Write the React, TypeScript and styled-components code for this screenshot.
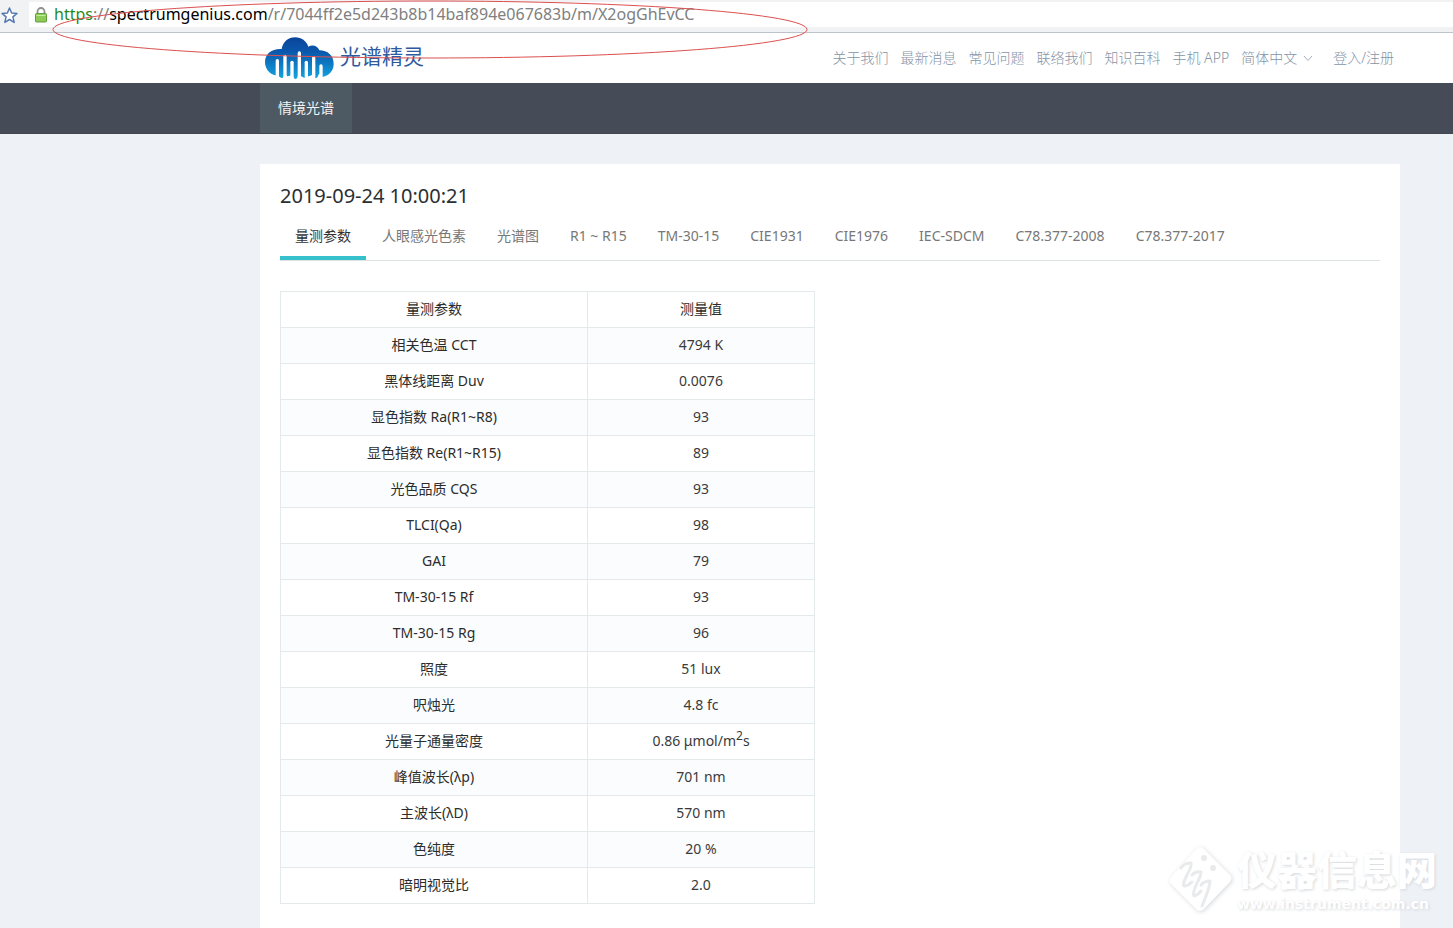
import React from "react";
import styled, { createGlobalStyle } from "styled-components";

const GlobalStyle = createGlobalStyle`
  *, *::before, *::after { box-sizing: border-box; }
  body {
    margin: 0;
    background: #eef2f7;
    color: #333;
    font-family: "Noto Sans", "Noto Sans CJK SC", sans-serif;
    font-size: 14px;
    line-height: 20px;
  }
`;

const Page = styled.div`
  position: relative;
  display: flex;
  flex-direction: column;
  min-height: 100vh;
  overflow: hidden;
`;

const gutter = "padding-left: 260px; padding-right: 53px;";

const BrowserBar = styled.div`
  display: flex;
  align-items: center;
  height: 33px;
  padding-bottom: 3px;
  background: #f1f2f4;
  border-bottom: 1px solid #bcc3cb;
`;

const StarButton = styled.button`
  display: flex;
  width: 29px;
  padding: 0;
  border: 0;
  background: none;
`;

const AddressField = styled.div`
  display: flex;
  flex: 1;
  align-items: center;
  gap: 7px;
  height: 25px;
  padding-left: 6px;
  background: #fff;
`;

const Address = styled.a`
  padding-bottom: 2px;
  color: #808080;
  font-size: 16px;
  line-height: 24px;
  text-decoration: none;
  white-space: nowrap;
`;

const Scheme = styled.span`
  color: #1f8a1f;
`;

const Host = styled.span`
  color: #000;
`;

const Header = styled.header`
  display: flex;
  align-items: center;
  justify-content: space-between;
  height: 50px;
  background: #fff;
  ${gutter}
`;

const Brand = styled.a`
  display: flex;
  align-items: center;
  gap: 5px;
  padding-left: 5px;
  color: #2d5aa0;
  font-size: 21px;
  line-height: 30px;
  text-decoration: none;
`;

const BrandName = styled.span`
  padding-bottom: 4px;
`;

const TopLinks = styled.nav`
  display: flex;
  align-items: center;
  gap: 12px;
  padding-right: 6px;
`;

const TopLink = styled.a`
  color: #8494a7;
  font-weight: 300;
  text-decoration: none;
  white-space: nowrap;
`;

const LanguagePicker = styled.label`
  display: flex;
  align-items: center;
  margin-right: 8px;
  color: #8494a7;
`;

const LanguageSelect = styled.select`
  appearance: none;
  width: 62px;
  padding: 0;
  border: 0;
  background: none;
  color: inherit;
  font: inherit;
  font-weight: 300;
`;

const MenuBar = styled.nav`
  display: flex;
  height: 51px;
  background: #464c57;
  border-bottom: 1px solid #414650;
  ${gutter}
`;

const MenuItem = styled.a`
  display: flex;
  align-items: center;
  padding: 0 18px;
  background: #4d5a64;
  color: #f1f3f5;
  text-decoration: none;
`;

const Main = styled.main`
  display: flex;
  flex: 1;
  padding-top: 30px;
  ${gutter}
`;

const Card = styled.section`
  flex: 1;
  padding: 18px 20px 24px;
  background: #fff;
`;

const Title = styled.h1`
  margin: 0;
  color: #2b2f33;
  font-size: 20px;
  font-weight: 400;
  line-height: 28px;
`;

const Tabs = styled.div`
  display: flex;
  gap: 1px;
  margin-bottom: 30px;
  border-bottom: 1px solid #dde2e5;
`;

const Tab = styled.button<{ $active?: boolean }>`
  height: 50px;
  padding: 5px 15px 0;
  border: 0;
  border-bottom: 4px solid ${(p) => (p.$active ? "#36c0cb" : "transparent")};
  background: none;
  color: ${(p) => (p.$active ? "#333" : "#777")};
  font: inherit;
  white-space: nowrap;
`;

const DataTable = styled.table`
  width: 535px;
  border-collapse: collapse;
  table-layout: fixed;
`;

const NameColumn = styled.col`
  width: 307px;
`;

const Row = styled.tr`
  height: 36px;
  tbody &:nth-child(odd) { background: #fafcfe; }
`;

const Cell = styled.td`
  padding: 0 0 2px;
  border: 1px solid #e4e9ec;
  color: #3a3a3a;
  font-weight: 400;
  text-align: center;
  sup {
    font-size: 12px;
    line-height: 0;
  }
`;

const NameCell = styled(Cell)`
  color: #2c2c2c;
`;

const RedEllipse = styled.svg`
  position: absolute;
  top: 0;
  left: 52px;
  pointer-events: none;
`;

const Watermark = styled.div`
  position: absolute;
  right: 16px;
  bottom: 12px;
  display: flex;
  align-items: center;
  gap: 1px;
  color: #fff;
  pointer-events: none;
  text-shadow: 1px 1px 3px #d4d7db;
`;

const WatermarkText = styled.div`
  display: flex;
  flex-direction: column;
  gap: 8px;
`;

const WatermarkName = styled.span`
  font-family: "Noto Sans CJK SC", sans-serif;
  font-size: 40px;
  font-weight: 900;
  line-height: 40px;
`;

const WatermarkSite = styled.span`
  font-family: "DejaVu Sans", sans-serif;
  font-size: 14px;
  font-weight: 700;
  line-height: 16px;
`;

const StarIcon = () => (
  <svg width="20" height="20" viewBox="0 0 20 20" aria-hidden="true">
    <path
      d="M9.5 3 L11.6 8 L17 8.4 L12.9 11.9 L14.2 17.4 L9.5 14.5 L4.8 17.4 L6.1 11.9 L2 8.4 L7.4 8 Z"
      fill="#fff"
      stroke="#5478b4"
      strokeWidth="1.5"
      strokeLinejoin="round"
    />
  </svg>
);

const LockIcon = () => (
  <svg width="12" height="16" viewBox="0 0 12 16" aria-hidden="true">
    <path d="M2.5 8 V4.5 a3.5 3.5 0 0 1 7 0 V8" fill="none" stroke="#8f8f8f" strokeWidth="1.8" />
    <rect x="0.5" y="6.5" width="11" height="8.5" rx="1" fill="#8ccb55" stroke="#5f9d3c" />
    <path d="M1.5 8.5 H10.5" stroke="#c4ea9c" />
  </svg>
);

const bars = [
  [32, 66],
  [55, 53],
  [76, 71],
  [98, 43],
  [119, 71],
  [141, 57],
  [163, 82],
];

const CloudLogo = () => (
  <svg width="70" height="42" viewBox="0 0 210 126" aria-hidden="true">
    <defs>
      <linearGradient id="cloud" x1="0" y1="0" x2="0" y2="1">
        <stop offset="0" stopColor="#0b4499" />
        <stop offset="0.35" stopColor="#0a58ac" />
        <stop offset="1" stopColor="#12a5e0" />
      </linearGradient>
    </defs>
    <path
      d="M30 115 C12 110 0 94 0 75 C0 50 22 34 50 36 C54 14 70 1 90 1 C110 1 124 12 130 29 C142 21 158 26 163 40 C188 40 206 56 206 80 C206 100 194 115 172 120 L168 112 L161 112 Q158 124 151 124 L144 112 Q136 118 130 118 Q124 126 117 122 Q106 118 100 112 Q98 126 91 126 Q85 124 82 112 Q76 118 67 118 L60 112 Q56 124 49 123 Q42 120 40 115 Z"
      fill="url(#cloud)"
    />
    {bars.map(([x, y]) => (
      <path key={x} d={`M${x} 126 V${y + 5} a5 5 0 0 1 10 0 V126 Z`} fill="#fff" />
    ))}
  </svg>
);

const Chevron = () => (
  <svg width="10" height="10" viewBox="0 0 10 10" aria-hidden="true">
    <path d="M1 3 L5 7.5 L9 3" fill="none" stroke="#a4b0bf" />
  </svg>
);

const WatermarkLogo = () => (
  <svg width="70" height="72" viewBox="0 0 70 72" aria-hidden="true">
    <g style={{ filter: "drop-shadow(1px 1px 2px #d4d7db)" }}>
      <path d="M31 4 Q34 2 37 4 L64 31 Q67 34 64 38 L38 65 Q34 69 30 65 L5 40 Q2 36 5 33 Z" fill="#fff" />
    </g>
    <g fill="none" stroke="#e9eaec" strokeWidth="3" strokeLinecap="round" strokeLinejoin="round">
      <path d="M15 24 Q18 19 25 19 Q26 22 21 31 Q16 41 18 42 Q22 42 26 38" />
      <path d="M26 31 Q29 27 35 28 Q35 32 31 39 Q26 50 28 52 Q32 51 35 47" />
      <path d="M35 41 Q38 37 44 37 Q44 43 36 62" />
    </g>
    <circle cx="38" cy="14" r="3" fill="#e9eaec" />
    <circle cx="47" cy="24" r="3" fill="#e9eaec" />
  </svg>
);

const topLinks = ["关于我们", "最新消息", "常见问题", "联络我们", "知识百科", "手机 APP"];

const tabs = [
  "量测参数",
  "人眼感光色素",
  "光谱图",
  "R1 ~ R15",
  "TM-30-15",
  "CIE1931",
  "CIE1976",
  "IEC-SDCM",
  "C78.377-2008",
  "C78.377-2017",
];

const readings: [string, React.ReactNode][] = [
  ["相关色温 CCT", "4794 K"],
  ["黑体线距离 Duv", "0.0076"],
  ["显色指数 Ra(R1~R8)", "93"],
  ["显色指数 Re(R1~R15)", "89"],
  ["光色品质 CQS", "93"],
  ["TLCI(Qa)", "98"],
  ["GAI", "79"],
  ["TM-30-15 Rf", "93"],
  ["TM-30-15 Rg", "96"],
  ["照度", "51 lux"],
  ["呎烛光", "4.8 fc"],
  ["光量子通量密度", <>0.86 μmol/m<sup>2</sup>s</>],
  ["峰值波长(λp)", "701 nm"],
  ["主波长(λD)", "570 nm"],
  ["色纯度", "20 %"],
  ["暗明视觉比", "2.0"],
];

export default function App() {
  return (
    <>
      <GlobalStyle />
      <Page lang="zh-CN">
        <BrowserBar>
          <StarButton aria-label="收藏">
            <StarIcon />
          </StarButton>
          <AddressField>
            <LockIcon />
            <Address href="#">
              <Scheme>https</Scheme>://<Host>spectrumgenius.com</Host>
              /r/7044ff2e5d243b8b14baf894e067683b/m/X2ogGhEvCC
            </Address>
          </AddressField>
        </BrowserBar>

        <Header>
          <Brand href="#">
            <CloudLogo />
            <BrandName>光谱精灵</BrandName>
          </Brand>
          <TopLinks>
            {topLinks.map((text) => (
              <TopLink key={text} href="#">{text}</TopLink>
            ))}
            <LanguagePicker>
              <LanguageSelect aria-label="语言">
                <option>简体中文</option>
              </LanguageSelect>
              <Chevron />
            </LanguagePicker>
            <TopLink href="#">登入/注册</TopLink>
          </TopLinks>
        </Header>

        <MenuBar>
          <MenuItem href="#">情境光谱</MenuItem>
        </MenuBar>

        <Main>
          <Card>
            <Title>2019-09-24 10:00:21</Title>
            <Tabs role="tablist">
              {tabs.map((text, i) => (
                <Tab key={text} role="tab" aria-selected={i === 0} $active={i === 0}>
                  {text}
                </Tab>
              ))}
            </Tabs>
            <DataTable>
              <colgroup>
                <NameColumn />
                <col />
              </colgroup>
              <thead>
                <Row>
                  <NameCell as="th" scope="col">量测参数</NameCell>
                  <NameCell as="th" scope="col">测量值</NameCell>
                </Row>
              </thead>
              <tbody>
                {readings.map(([name, value]) => (
                  <Row key={name}>
                    <NameCell as="th" scope="row">{name}</NameCell>
                    <Cell>{value}</Cell>
                  </Row>
                ))}
              </tbody>
            </DataTable>
          </Card>
        </Main>

        <RedEllipse width="756" height="60" viewBox="0 0 756 60" aria-hidden="true">
          <ellipse cx="378" cy="29.5" rx="377" ry="28.5" fill="none" stroke="#dc4f4f" />
        </RedEllipse>

        <Watermark>
          <WatermarkLogo />
          <WatermarkText>
            <WatermarkName>仪器信息网</WatermarkName>
            <WatermarkSite>www.instrument.com.cn</WatermarkSite>
          </WatermarkText>
        </Watermark>
      </Page>
    </>
  );
}
